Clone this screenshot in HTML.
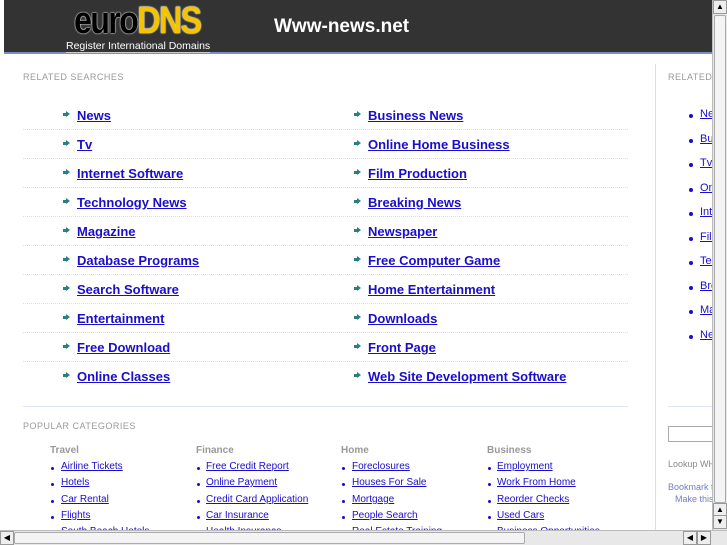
<!DOCTYPE html>
<html><head><style>
*{margin:0;padding:0;box-sizing:border-box}
body{width:727px;height:545px;overflow:hidden;background:#fff;font-family:"Liberation Sans",Arial,sans-serif;position:relative;white-space:nowrap}
.hdr{position:absolute;left:4px;top:0;width:708px;height:54px;background:#333;border-bottom:2px solid #7b8fc4}
.logo{position:absolute;left:70px;top:4px;font:bold 38px/34px "Liberation Sans",sans-serif;letter-spacing:-2px;transform:scaleX(0.85);transform-origin:left;color:#000;text-shadow:0 0 2px #fff,0 0 1px #fff}
.logo span{color:#f5c400}
.reg{position:absolute;left:62px;top:40px;color:#fff;font-size:10.5px;border-bottom:1px solid #ccc;line-height:12px}
.title{position:absolute;left:270px;top:16px;color:#fff;font:bold 19px "Liberation Sans",sans-serif}
.lbl{position:absolute;font-size:9px;color:#999;letter-spacing:.5px}
.row{position:absolute;left:23px;width:605px;height:29px;border-bottom:1px dotted #d3def0}
.it{position:absolute;top:0;font:bold 13px "Liberation Sans",sans-serif;color:#1a0dcc;text-decoration:underline}
.ar{position:absolute;width:7px;height:7px}
.ar:before{content:"";position:absolute;left:0;top:2px;width:5px;height:3px;background:#2a8080}
.ar:after{content:"";position:absolute;left:3px;top:0;border-top:3.5px solid transparent;border-bottom:3.5px solid transparent;border-left:4px solid #2a8080}
.vline{position:absolute;left:655px;top:64px;width:1px;height:466px;background:#d6e0f0}
.rb{position:absolute;left:689px;width:4px;height:4px;background:#1a0dcc;border-radius:50%}
.rl{position:absolute;left:700px;font-size:11px;color:#1a0dcc;text-decoration:underline}
.cat{position:absolute;font:bold 10px "Liberation Sans",sans-serif;color:#999}
.cl{position:absolute;font-size:10px;color:#1a0dcc;text-decoration:underline}
.cb{position:absolute;width:3px;height:3px;background:#1a0dcc;border-radius:50%}
.vs{position:absolute;left:712px;top:0;width:15px;height:530px;background:#e8e8e8;border-left:1px solid #bbb}
.hs{position:absolute;left:0;top:530px;width:727px;height:15px;background:#e8e8e8;border-top:1px solid #bbb}
.btn{position:absolute;width:14px;height:14px;background:#eee;border:1px solid #999;font-size:8px;line-height:12px;text-align:center}
.clip{position:absolute;left:0;top:0;width:712px;height:530px;overflow:hidden}
</style></head><body>
<div class="clip">
<div class="hdr">
<div class="logo">euro<span>DNS</span></div>
<div class="reg">Register International Domains</div>
<div class="title">Www-news.net</div>
</div>
<div class="lbl" style="left:23px;top:72px">RELATED SEARCHES</div>

<div class="row" style="top:101px"><div class="ar" style="left:40px;top:10px"></div><div class="it" style="left:54px;top:7px">News</div><div class="ar" style="left:331px;top:10px"></div><div class="it" style="left:345px;top:7px">Business News</div></div>
<div class="row" style="top:130px"><div class="ar" style="left:40px;top:10px"></div><div class="it" style="left:54px;top:7px">Tv</div><div class="ar" style="left:331px;top:10px"></div><div class="it" style="left:345px;top:7px">Online Home Business</div></div>
<div class="row" style="top:159px"><div class="ar" style="left:40px;top:10px"></div><div class="it" style="left:54px;top:7px">Internet Software</div><div class="ar" style="left:331px;top:10px"></div><div class="it" style="left:345px;top:7px">Film Production</div></div>
<div class="row" style="top:188px"><div class="ar" style="left:40px;top:10px"></div><div class="it" style="left:54px;top:7px">Technology News</div><div class="ar" style="left:331px;top:10px"></div><div class="it" style="left:345px;top:7px">Breaking News</div></div>
<div class="row" style="top:217px"><div class="ar" style="left:40px;top:10px"></div><div class="it" style="left:54px;top:7px">Magazine</div><div class="ar" style="left:331px;top:10px"></div><div class="it" style="left:345px;top:7px">Newspaper</div></div>
<div class="row" style="top:246px"><div class="ar" style="left:40px;top:10px"></div><div class="it" style="left:54px;top:7px">Database Programs</div><div class="ar" style="left:331px;top:10px"></div><div class="it" style="left:345px;top:7px">Free Computer Game</div></div>
<div class="row" style="top:275px"><div class="ar" style="left:40px;top:10px"></div><div class="it" style="left:54px;top:7px">Search Software</div><div class="ar" style="left:331px;top:10px"></div><div class="it" style="left:345px;top:7px">Home Entertainment</div></div>
<div class="row" style="top:304px"><div class="ar" style="left:40px;top:10px"></div><div class="it" style="left:54px;top:7px">Entertainment</div><div class="ar" style="left:331px;top:10px"></div><div class="it" style="left:345px;top:7px">Downloads</div></div>
<div class="row" style="top:333px"><div class="ar" style="left:40px;top:10px"></div><div class="it" style="left:54px;top:7px">Free Download</div><div class="ar" style="left:331px;top:10px"></div><div class="it" style="left:345px;top:7px">Front Page</div></div>
<div class="row" style="top:362px;border-bottom:1px solid #dde6f2;height:45px"><div class="ar" style="left:40px;top:10px"></div><div class="it" style="left:54px;top:7px">Online Classes</div><div class="ar" style="left:331px;top:10px"></div><div class="it" style="left:345px;top:7px">Web Site Development Software</div></div>

<div class="lbl" style="left:23px;top:421px">POPULAR CATEGORIES</div>
<div class="cat" style="left:50px;top:445px">Travel</div>
<div class="cat" style="left:196px;top:445px">Finance</div>
<div class="cat" style="left:341px;top:445px">Home</div>
<div class="cat" style="left:487px;top:445px">Business</div>

<div class="cb" style="left:51px;top:467px"></div><div class="cl" style="left:61px;top:461px">Airline Tickets</div>
<div class="cb" style="left:51px;top:483px"></div><div class="cl" style="left:61px;top:477px">Hotels</div>
<div class="cb" style="left:51px;top:500px"></div><div class="cl" style="left:61px;top:494px">Car Rental</div>
<div class="cb" style="left:51px;top:516px"></div><div class="cl" style="left:61px;top:510px">Flights</div>
<div class="cl" style="left:61px;top:526px">South Beach Hotels</div>
<div class="cb" style="left:197px;top:467px"></div><div class="cl" style="left:206px;top:461px">Free Credit Report</div>
<div class="cb" style="left:197px;top:483px"></div><div class="cl" style="left:206px;top:477px">Online Payment</div>
<div class="cb" style="left:197px;top:500px"></div><div class="cl" style="left:206px;top:494px">Credit Card Application</div>
<div class="cb" style="left:197px;top:516px"></div><div class="cl" style="left:206px;top:510px">Car Insurance</div>
<div class="cl" style="left:206px;top:526px">Health Insurance</div>
<div class="cb" style="left:342px;top:467px"></div><div class="cl" style="left:352px;top:461px">Foreclosures</div>
<div class="cb" style="left:342px;top:483px"></div><div class="cl" style="left:352px;top:477px">Houses For Sale</div>
<div class="cb" style="left:342px;top:500px"></div><div class="cl" style="left:352px;top:494px">Mortgage</div>
<div class="cb" style="left:342px;top:516px"></div><div class="cl" style="left:352px;top:510px">People Search</div>
<div class="cl" style="left:352px;top:526px">Real Estate Training</div>
<div class="cb" style="left:488px;top:467px"></div><div class="cl" style="left:497px;top:461px">Employment</div>
<div class="cb" style="left:488px;top:483px"></div><div class="cl" style="left:497px;top:477px">Work From Home</div>
<div class="cb" style="left:488px;top:500px"></div><div class="cl" style="left:497px;top:494px">Reorder Checks</div>
<div class="cb" style="left:488px;top:516px"></div><div class="cl" style="left:497px;top:510px">Used Cars</div>
<div class="cl" style="left:497px;top:526px">Business Opportunities</div>

<div class="vline"></div>
<div class="lbl" style="left:668px;top:72px">RELATED SEARCHES</div>
<div class="rb" style="top:114px"></div><div class="rl" style="top:108px">News</div>
<div class="rb" style="top:139px"></div><div class="rl" style="top:133px">Business</div>
<div class="rb" style="top:163px"></div><div class="rl" style="top:157px">Tv</div>
<div class="rb" style="top:188px"></div><div class="rl" style="top:182px">Online</div>
<div class="rb" style="top:212px"></div><div class="rl" style="top:206px">Internet</div>
<div class="rb" style="top:237px"></div><div class="rl" style="top:231px">Film</div>
<div class="rb" style="top:261px"></div><div class="rl" style="top:255px">Technology</div>
<div class="rb" style="top:286px"></div><div class="rl" style="top:280px">Breaking</div>
<div class="rb" style="top:310px"></div><div class="rl" style="top:304px">Magazine</div>
<div class="rb" style="top:335px"></div><div class="rl" style="top:329px">Newspaper</div>
<div style="position:absolute;left:668px;top:406px;width:50px;height:1px;background:#dde6f2"></div>
<div style="position:absolute;left:668px;top:426px;width:50px;height:16px;border:1px solid #aaa"></div>
<div style="position:absolute;left:668px;top:459px;font-size:9px;color:#888">Lookup WHOIS</div>
<div style="position:absolute;left:668px;top:482px;font-size:9px;color:#7080c0">Bookmark this</div>
<div style="position:absolute;left:675px;top:494px;font-size:9px;color:#7080c0">Make this</div>
</div>

<div class="vs">
<div class="btn" style="left:0;top:0">▲</div>
<div style="position:absolute;left:1px;top:15px;width:12px;height:488px;background:#f4f4f4;border:1px solid #aaa;border-radius:2px"></div>
<div class="btn" style="left:0;top:503px">▲</div>
<div class="btn" style="left:0;top:515px">▼</div>
</div>
<div class="hs">
<div class="btn" style="left:0;top:0">◀</div>
<div style="position:absolute;left:14px;top:1px;width:511px;height:12px;background:#f4f4f4;border:1px solid #aaa;border-radius:2px"></div>
<div class="btn" style="left:683px;top:0">◀</div>
<div class="btn" style="left:697px;top:0">▶</div>
</div>
</body></html>
